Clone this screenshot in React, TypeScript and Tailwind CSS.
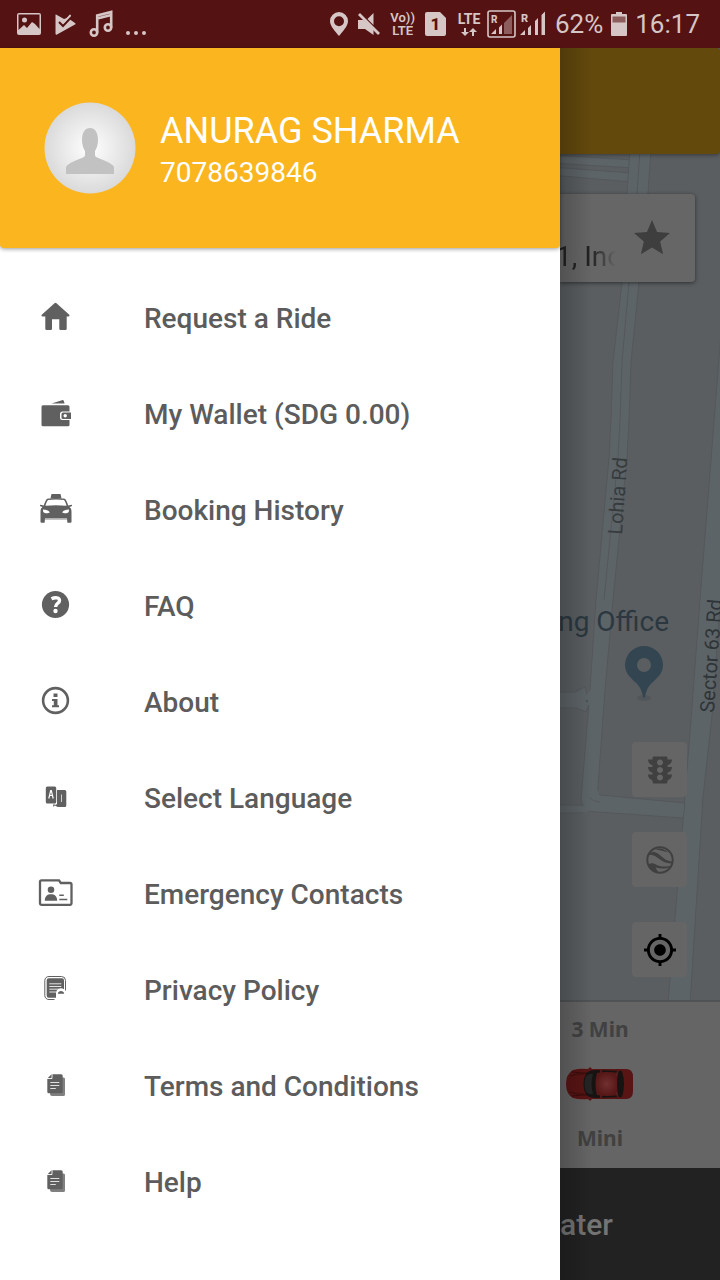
import type { ReactNode } from "react";

const STATUS = "#d6c6c6";

function PictureIcon() {
  return (
    <svg width="24" height="24" viewBox="0 0 24 24" fill={STATUS}>
      <path fillRule="evenodd" d="M2 1h20a2 2 0 0 1 2 2v18a2 2 0 0 1-2 2H2a2 2 0 0 1-2-2V3a2 2 0 0 1 2-2zm-.5 1.500v15.500l5.500-5 3 3 5-6 3 2 4.500 5V2.500z" />
      <circle cx="7.500" cy="8" r="2.500" />
    </svg>
  );
}

function PlayCheckIcon() {
  return (
    <svg width="22" height="24" viewBox="0 0 22 24">
      <path d="M2 2.500 10 7l3-1 4-3.500-1 5 5 3.500c.8.500.8 1 0 1.500L3 22.500c-1 .5-1.500 0-1.500-1V3c0-.6.2-.7.5-.5z" fill={STATUS} />
      <path d="m5 10 4 4 8-8.500" fill="none" stroke="#551212" strokeWidth="2" />
      <path d="m8 9 1.500 1.500L16.500 3" fill="none" stroke={STATUS} strokeWidth="1.800" />
    </svg>
  );
}

function MusicIcon() {
  return (
    <svg width="24" height="28" viewBox="0 0 24 28" fill="none" stroke={STATUS} strokeWidth="2.600">
      <circle cx="5" cy="22.500" r="3.200" />
      <circle cx="19" cy="17.500" r="3.200" />
      <path d="M8.200 22.500V5.500l14-3.500v15.500M8.200 8.500l14-3.500" />
    </svg>
  );
}

function PlaceIcon() {
  return (
    <svg width="18" height="24" viewBox="0 0 18 24" fill={STATUS}>
      <path fillRule="evenodd" d="M9 0a9 9 0 0 1 9 9c0 5-5 10-9 15C5 19 0 14 0 9a9 9 0 0 1 9-9zm0 4.200a5 5 0 1 0 0 10 5 5 0 0 0 0-10z" />
    </svg>
  );
}

function MuteIcon() {
  return (
    <svg width="22" height="24" viewBox="0 0 22 24" fill={STATUS}>
      <path d="M15.500 1v12L9.500 7zM0 8h5.500l10 9v6L7 17H0z" />
      <path d="m1 2 20 20" stroke={STATUS} strokeWidth="2.800" />
    </svg>
  );
}

function SimIcon() {
  return (
    <svg width="21" height="24" viewBox="0 0 21 24">
      <path d="M2 0h13l6 6v16a2 2 0 0 1-2 2H2a2 2 0 0 1-2-2V2a2 2 0 0 1 2-2z" fill={STATUS} />
      <text x="10.500" y="18" textAnchor="middle" fontSize="17" fontWeight="800" fontFamily="Roboto, sans-serif" fill="#551212">1</text>
    </svg>
  );
}

function LteIcon() {
  return (
    <svg width="27" height="26" viewBox="0 0 27 26" fill={STATUS}>
      <text x="13" y="13" textAnchor="middle" fontSize="14" fontWeight="700" fontFamily="Roboto, sans-serif">LTE</text>
      <path d="M8 17h2v4h3l-4 4-4-4h3zM16 25h2v-4h3l-4-4-4 4h3z" />
    </svg>
  );
}

function BoxedSignalIcon() {
  return (
    <svg width="29" height="28" viewBox="0 0 29 28">
      <rect x="1" y="1" width="27" height="26" rx="2" fill="none" stroke={STATUS} strokeWidth="1.600" />
      <text x="4" y="13" fontSize="10" fontWeight="800" fontFamily="Roboto, sans-serif" fill={STATUS}>R</text>
      <path d="M17 24V13l8-8v19z" fill="#8d5c5c" />
      <path d="M4 24h5v-5zM12 24v-6.500l3-3V24z" fill={STATUS} />
    </svg>
  );
}

function SignalIcon() {
  return (
    <svg width="25" height="26" viewBox="0 0 25 26" fill={STATUS}>
      <text x="1" y="11" fontSize="11" fontWeight="800" fontFamily="Roboto, sans-serif">R</text>
      <path d="M0 24h5v-5zM8 24v-7l3-3v10zM15 24V10l3-3v17zM21.500 24V4L25 .5V24z" />
    </svg>
  );
}

function BatteryIcon() {
  return (
    <svg width="16" height="24" viewBox="0 0 16 24">
      <path d="M5 0h6v2h4a1 1 0 0 1 1 1v20a1 1 0 0 1-1 1H1a1 1 0 0 1-1-1V3a1 1 0 0 1 1-1h4z" fill={STATUS} />
      <path d="M1.500 4.500h13v6h-13z" fill="#8d5c5c" />
    </svg>
  );
}

function StatusBar() {
  return (
    <header className="flex h-12 shrink-0 items-center justify-between bg-[#551212] pr-5 pl-[17px] text-[#d6c6c6]">
      <div className="flex items-center gap-[13px]">
        <PictureIcon />
        <PlayCheckIcon />
        <MusicIcon />
        <svg width="22" height="24" viewBox="0 0 22 24" fill={STATUS}>
          <circle cx="2" cy="21" r="2" />
          <circle cx="10" cy="21" r="2" />
          <circle cx="18" cy="21" r="2" />
        </svg>
      </div>
      <div className="flex items-center gap-2.5">
        <PlaceIcon />
        <MuteIcon />
        <div className="flex flex-col items-center text-[13px] leading-[13px] font-semibold">
          <span>Vo))</span>
          <span>LTE</span>
        </div>
        <SimIcon />
        <div className="flex items-center gap-1">
          <LteIcon />
          <BoxedSignalIcon />
          <SignalIcon />
        </div>
        <div className="flex items-center gap-2 text-[26px] leading-8">
          <span>62%</span>
          <BatteryIcon />
          <span>16:17</span>
        </div>
      </div>
    </header>
  );
}

function Avatar() {
  return (
    <svg width="92" height="92" viewBox="0 0 92 92" role="img" aria-label="Profile photo">
      <defs>
        <radialGradient id="avatar">
          <stop offset="0" stopColor="#ffffff" />
          <stop offset="1" stopColor="#dadada" />
        </radialGradient>
      </defs>
      <circle cx="46" cy="46" r="45.500" fill="url(#avatar)" />
      <path fill="#c2c2c2" d="M46 26c5 0 8 4.500 8 12 0 5-1.500 8.500-3 11v4c0 1.200.8 2 2 2.500 5.500 2.200 12 4.500 16 8 .8.700 1 1.500 1 2.500v6H22v-6c0-1 .2-1.800 1-2.500 4-3.500 10.500-5.800 16-8 1.200-.5 2-1.300 2-2.500v-4c-1.500-2.500-3-6-3-11 0-7.500 3-12 8-12z" />
    </svg>
  );
}

function MenuIcon({ children }: { children: ReactNode }) {
  return (
    <svg width="36" height="36" viewBox="0 1 36 36" fill="#606060" aria-hidden="true" className="shrink-0">
      {children}
    </svg>
  );
}

const documents = (
  <>
    <path d="M14 9.500h11.500a1.500 1.500 0 0 1 1.500 1.500v15.500a1.500 1.500 0 0 1-1.500 1.500H14a2 2 0 0 1-2-2z" fill="#808080" />
    <path d="M13.500 6.300h9.700a1.500 1.500 0 0 1 1.500 1.500v16a1.500 1.500 0 0 1-1.500 1.500H10.800a1.500 1.500 0 0 1-1.500-1.500V10.500z" />
    <path stroke="#fff" strokeWidth=".9" fill="none" d="M14 6v4.500H9" />
    <path stroke="#e0e0e0" strokeWidth="1" fill="none" d="M12.300 14.500h9M12.300 17.500h9M12.300 20.500h5.500" />
  </>
);

const items: { label: string; icon: ReactNode }[] = [
  {
    label: "Request a Ride",
    icon: <path d="M16.500 3.200a1.500 1.500 0 0 1 2 0L31 14.500c1 1 .5 2-.7 2h-1.600v12.300a1.200 1.200 0 0 1-1.200 1.200h-5a1.200 1.200 0 0 1-1.200-1.200v-9.500H14v9.500a1.200 1.200 0 0 1-1.200 1.200H8.500a1.200 1.200 0 0 1-1.200-1.200V16.500H4.700c-1.200 0-1.700-1-.7-2z" />,
  },
  {
    label: "My Wallet (SDG 0.00)",
    icon: (
      <>
        <path d="M13.500 7.500 24 4.200c1-.3 1.500 0 1.800.8l.8 2.500z" />
        <rect x="3.500" y="9.200" width="28" height="21" rx="1.500" />
        <path d="M33 15.500h-8.500a2.500 2.500 0 0 0-2.500 2.500v3.500a2.500 2.500 0 0 0 2.500 2.500H33z" fill="#fff" />
        <path d="M33 16.500h-8a1.500 1.500 0 0 0-1.500 1.500v3.500A1.500 1.500 0 0 0 25 23h8z" />
        <circle cx="27.200" cy="19.700" r="1.700" fill="#fff" />
      </>
    ),
  },
  {
    label: "Booking History",
    icon: (
      <>
        <path d="M13.500 2h9l1 4.200h-11z" />
        <path d="M9 6.800c6-1 12-1 18 0 1.400 1.500 2.400 4.200 3.200 6.700l3.300-.8c.8 0 .8 1.300 0 1.500l-2 .8c1.600 1.200 2 2.500 2 5V30c0 .5-.4.8-1 .8h-2.300c-.6 0-1-.4-1-1V27.500H6.800v2.300c0 .6-.4 1-1 1H3.500c-.6 0-1-.3-1-.8V20c0-2.500.4-3.800 2-5l-2-.8c-.8-.2-.8-1.500 0-1.500l3.300.8c.8-2.500 1.800-5.200 3.200-6.700z" />
        <path fill="#fff" d="M10 8c5.500-.8 10.500-.8 16 0 1.300 1.700 2 3.600 2.600 5.800-7-.8-14.200-.8-21.200 0C8 11.600 8.700 9.700 10 8zM5 17.500c3.200 0 5.500.8 6.800 2.800-1.500 1.500-5.300 1.300-6.600-.3zM31 17.500c-3.200 0-5.500.8-6.800 2.800 1.500 1.500 5.300 1.300 6.600-.3zM7 26.500h22v.8H7z" />
      </>
    ),
  },
  {
    label: "FAQ",
    icon: (
      <>
        <circle cx="17.500" cy="16.500" r="13.600" />
        <path d="M13.500 10.800c4-2 8-1.200 8 1.600 0 3-3.900 2.800-3.900 6.600" fill="none" stroke="#fff" strokeWidth="3.400" />
        <circle cx="17.500" cy="23" r="2.200" fill="#fff" />
      </>
    ),
  },
  {
    label: "About",
    icon: (
      <>
        <circle cx="17.500" cy="16.500" r="12.400" fill="none" stroke="#606060" strokeWidth="2.600" />
        <path d="M15.500 9.500h4v3.500h-4zM14 15h5.500v6.300H21V23.300h-7v-2h1.800v-4.300H14z" />
      </>
    ),
  },
  {
    label: "Select Language",
    icon: (
      <>
        <path d="M19 10h7.800a1.500 1.500 0 0 1 1.500 1.500v14a1.500 1.500 0 0 1-1.500 1.500h-7l-3-1.500 2.200-1.500zM15 24.500h2.500L15.500 27z" />
        <rect x="7.800" y="6.500" width="10.400" height="17" rx="1.500" />
        <path d="M10.800 18.500 12.700 10.500h.6l1.900 8M11.500 15.500h3" fill="none" stroke="#fff" strokeWidth="1.200" />
        <path d="M23.500 14.500V22" fill="none" stroke="#d0d0d0" />
      </>
    ),
  },
  {
    label: "Emergency Contacts",
    icon: (
      <>
        <path d="M3.500 4.300H21l1.800 2.700h9.200a1.500 1.500 0 0 1 1.500 1.500v18.800a1.500 1.500 0 0 1-1.500 1.500H3.500A1.500 1.500 0 0 1 2 27.300V5.800a1.500 1.500 0 0 1 1.500-1.500z" fill="none" stroke="#606060" strokeWidth="2.300" />
        <circle cx="13" cy="13.700" r="3.300" />
        <path d="M6.800 24.700c0-4.500 2.700-6.400 6.200-6.400s6.200 1.900 6.200 6.400zM21.300 18.600h4.500v1.500h-4.500zM21.300 22.800h8v1.500h-8z" />
      </>
    ),
  },
  {
    label: "Privacy Policy",
    icon: (
      <>
        <path d="M16.500 27.500H11A4 4 0 0 1 6.800 23.500V8.500A4 4 0 0 1 11 4.500h12.500A4 4 0 0 1 27.500 8.500v10" fill="none" stroke="#606060" strokeWidth="1" />
        <rect x="8.700" y="6.300" width="17.300" height="19.500" rx="2" />
        <path d="M11.300 11.800h12M11.300 14.500h12M11.300 17.200h10M11.300 20h7" stroke="#e4e4e4" strokeWidth="1" />
        <path d="M18 28v-6a5 5 0 0 1 10-1.500V28z" fill="#fff" />
        <path d="M19.800 21.800c.3-3.600 6-3.600 6.400 0z" />
      </>
    ),
  },
  { label: "Terms and Conditions", icon: documents },
  { label: "Help", icon: documents },
];

function Drawer() {
  return (
    <aside className="z-10 flex w-7/9 shrink-0 flex-col bg-white">
      <div className="flex h-[200px] items-center gap-6 rounded-b-[4px] bg-[#fbb51e] pl-11 text-white shadow-[0_1px_4px_rgba(0,0,0,0.4)]">
        <Avatar />
        <div className="pt-1">
          <p className="text-[36px] leading-[46px]">ANURAG SHARMA</p>
          <p className="text-[28px] leading-[38px]">7078639846</p>
        </div>
      </div>
      <nav className="flex flex-col pt-[23px]">
        {items.map((item) => (
          <a key={item.label} href="#" className="flex h-24 items-center gap-[70px] pl-[38px] text-[28px] leading-8 font-medium text-[#5c5c5c]">
            <MenuIcon>{item.icon}</MenuIcon>
            {item.label}
          </a>
        ))}
      </nav>
    </aside>
  );
}

function MapDrawing() {
  return (
    <svg className="absolute inset-0 h-full w-full" viewBox="560 154 160 846" preserveAspectRatio="xMinYMin slice" aria-label="Map">
      <g fill="#5d6467" stroke="#54585b" strokeWidth="1">
        <path d="M550 155 634 160v8L550 163zM550 167 632 173v9L550 175z" />
        <path d="M722 320 700 600 691 720 683 820 668 1004H690L703 797 712 716 722 580z" />
        <path d="M550 692h25l10-5 4 16-3 9-10-4H550zM550 805h32v8H550z" />
        <path d="M597 792 600 795 685 803 683 818 584 811z" />
        <path d="M630 150 627 193 622 283 613 362 611 420 609 458 596 600 590 690 581 800 585 811 597 800 605 690 613 600 627 458 629 420 631 362 639 283 648 193 651 150z" />
        <path fill="none" d="M640 150 637 193 629 283 622 362 620 420 618 458 604 600" />
      </g>
      <path fill="#5d6467" d="M582 792 597 789 600 796 684 804 683 816 586 809zM584 698 592 688V710zM548 806h40v6h-40z" />
      <path fill="none" stroke="#54585b" d="M590 797q1 4 10 5" />
      <circle cx="587" cy="701" r="1.200" fill="#4d5356" />
      <g fontFamily="Roboto, sans-serif">
        <text transform="translate(622 535) rotate(-86)" fontSize="20" fill="#363b3e">Lohia Rd</text>
        <text transform="translate(714 713) rotate(-86)" fontSize="20" fill="#2e3438">Sector 63 Rd</text>
        <text x="669" y="631" fontSize="28" textAnchor="end" fill="#2b3840">ng Office</text>
      </g>
      <ellipse cx="644" cy="698" rx="7" ry="3" fill="#50565a" />
      <path fill="#334550" fillRule="evenodd" d="M644 646a19 19 0 0 1 19 19c0 8-5 12-10 17-5 4-7 9-8 15q-1 2-2 0c-1-6-3-11-8-15-5-5-10-9-10-17a19 19 0 0 1 19-19zm0 12a7 7 0 1 0 0 14 7 7 0 0 0 0-14z" />
    </svg>
  );
}

const mapButton = "flex size-[55px] items-center justify-center rounded-[4px] bg-[#656565]";

function MapArea() {
  return (
    <section className="relative flex flex-1 flex-col bg-[#5a5e61]">
      <MapDrawing />
      <div className="relative mt-10 mr-[25px] flex h-[88px] justify-end rounded-r-[4px] bg-[#666] pr-[25px] shadow-[0_1px_4px_rgba(0,0,0,0.5)]">
        <p className="flex flex-1 justify-end self-end overflow-hidden bg-linear-to-r from-[#222] from-50% to-[#666] to-90% bg-clip-text pb-[7px] text-[28px] leading-9 whitespace-nowrap text-transparent">
          1, Inc
        </p>
        <button type="button" aria-label="Favourite" className="ml-3 flex items-center">
          <svg width="36" height="36" viewBox="2 2 20 20" fill="#3e3e3e">
            <path d="M12 17.270 18.180 21l-1.640-7.030L22 9.240l-7.190-.61L12 2 9.190 8.630 2 9.240l5.460 4.730L5.820 21z" />
          </svg>
        </button>
      </div>
      <div className="relative mt-auto mr-[33px] mb-[23px] flex flex-col items-end gap-[35px]">
        <button type="button" aria-label="Traffic" className={mapButton}>
          <svg width="36" height="36" viewBox="0 0 24 24" fill="#404040">
            <path d="M20 10h-3V8.860c1.720-.45 3-2 3-3.860h-3V4c0-.55-.45-1-1-1H8c-.55 0-1 .45-1 1v1H4c0 1.860 1.280 3.410 3 3.860V10H4c0 1.860 1.280 3.410 3 3.860V15H4c0 1.860 1.280 3.410 3 3.860V20c0 .55.45 1 1 1h8c.55 0 1-.45 1-1v-1.140c1.720-.45 3-2 3-3.860h-3v-1.140c1.720-.45 3-2 3-3.860zm-8 9c-1.110 0-2-.9-2-2s.89-2 2-2 2 .9 2 2-.89 2-2 2zm0-5c-1.110 0-2-.9-2-2s.89-2 2-2 2 .9 2 2-.89 2-2 2zm0-5c-1.110 0-2-.9-2-2s.89-2 2-2 2 .9 2 2-.89 2-2 2z" />
          </svg>
        </button>
        <button type="button" aria-label="Satellite view" className={mapButton}>
          <svg width="28" height="28" viewBox="0 0 28 28" fill="#404040">
            <circle cx="14" cy="14" r="12.700" fill="none" stroke="#404040" strokeWidth="2" />
            <path d="M2 9.500C4 6.500 6 5.500 8.500 6c3.500.8 6 4 9.500 6.500 2.500 1.800 5 2.800 8.500 3l-.5 2c-5 0-8.500-1.500-12-4C10 10.500 6 7.500 2 9.500zM2 19c2-2 4.500-2.300 7-1 2.500 1.500 5 2.500 8 2.500 2.500 0 5 0 7.500-.8l-1 1.800C19 23 14 22.500 9.500 21.500l3 5C8 26 4 23.500 2 19zM9 3c5-1.500 10 0 13 3.500C18.500 4.500 13.500 5 9 3z" />
          </svg>
        </button>
        <button type="button" aria-label="My location" className={mapButton}>
          <svg width="32" height="32" viewBox="1 1 22 22" fill="#000">
            <path d="M12 8c-2.210 0-4 1.790-4 4s1.790 4 4 4 4-1.790 4-4-1.790-4-4-4zm8.940 3c-.46-4.170-3.770-7.480-7.940-7.940V1h-2v2.060C6.830 3.520 3.520 6.830 3.060 11H1v2h2.060c.46 4.170 3.770 7.480 7.940 7.940V23h2v-2.060c4.170-.46 7.480-3.770 7.940-7.940H23v-2h-2.060zM12 19c-3.870 0-7-3.130-7-7s3.130-7 7-7 7 3.130 7 7-3.130 7-7 7z" />
          </svg>
        </button>
      </div>
    </section>
  );
}

function CarDrawing() {
  return (
    <svg width="68" height="34" viewBox="0 0 68 34" role="img" aria-label="Mini car">
      <defs>
        <radialGradient id="roof">
          <stop offset="0" stopColor="#713030" />
          <stop offset="1" stopColor="#571717" />
        </radialGradient>
      </defs>
      <path d="M7 3Q14 1 22 2l2-2 2 2h34q7 0 7 8v14q0 8-7 8H26l-2 2-2-2q-8 1-15-1Q0 27 0 17T7 3z" fill="#591414" />
      <path d="M6 5q9 1 14 1M6 29q9-1 14-1M4 9q8-3 14-2M4 25q8 3 14 2" stroke="#3a0d0d" fill="none" />
      <path d="M20 6q4-3 10-3l26 1q4 13 0 26l-26 1q-6 0-10-3-5-11 0-22z" fill="#181313" />
      <path d="M31 6q10-2 21 0-2 11 0 22-11 2-21 0-3-11 0-22z" fill="url(#roof)" />
      <path d="M20 9q4-3 7-2-3 10 0 20-3 1-7-2-3-8 0-16z" fill="#242424" />
      <path d="M35 3v3M35 28v3M52 4l-2 5M52 30l-2-5" stroke="#5f1d1d" strokeWidth="1.500" />
    </svg>
  );
}

function RideScreen() {
  return (
    <main className="relative flex min-w-0 flex-1 flex-col overflow-hidden bg-[#5a5e61]">
      <div className="z-10 h-[106px] rounded-r-[4px] bg-[#64490c] shadow-[0_1px_4px_rgba(0,0,0,0.4)]" />
      <MapArea />
      <section className="flex h-[168px] border-t-2 border-[#4f5355] bg-[#646564]">
        <button type="button" className="flex w-20 flex-col items-center justify-center pb-0.5 font-['Noto_Sans',sans-serif] text-[21px] leading-[29px] font-bold text-[#414141]">
          <span>3 Min</span>
          <span className="flex h-20 items-center">
            <CarDrawing />
          </span>
          <span>Mini</span>
        </button>
      </section>
      <button type="button" className="flex h-28 items-center bg-[#222] pt-0.5 text-[30px] leading-9 font-medium text-[#747474]">
        ater
      </button>
      <div className="pointer-events-none absolute inset-y-0 left-0 z-20 w-8 bg-linear-to-r from-black/20 to-transparent" />
    </main>
  );
}

export default function App() {
  return (
    <div className="flex min-h-screen flex-col font-['Roboto',sans-serif]">
      <StatusBar />
      <div className="flex flex-1">
        <Drawer />
        <RideScreen />
      </div>
    </div>
  );
}
